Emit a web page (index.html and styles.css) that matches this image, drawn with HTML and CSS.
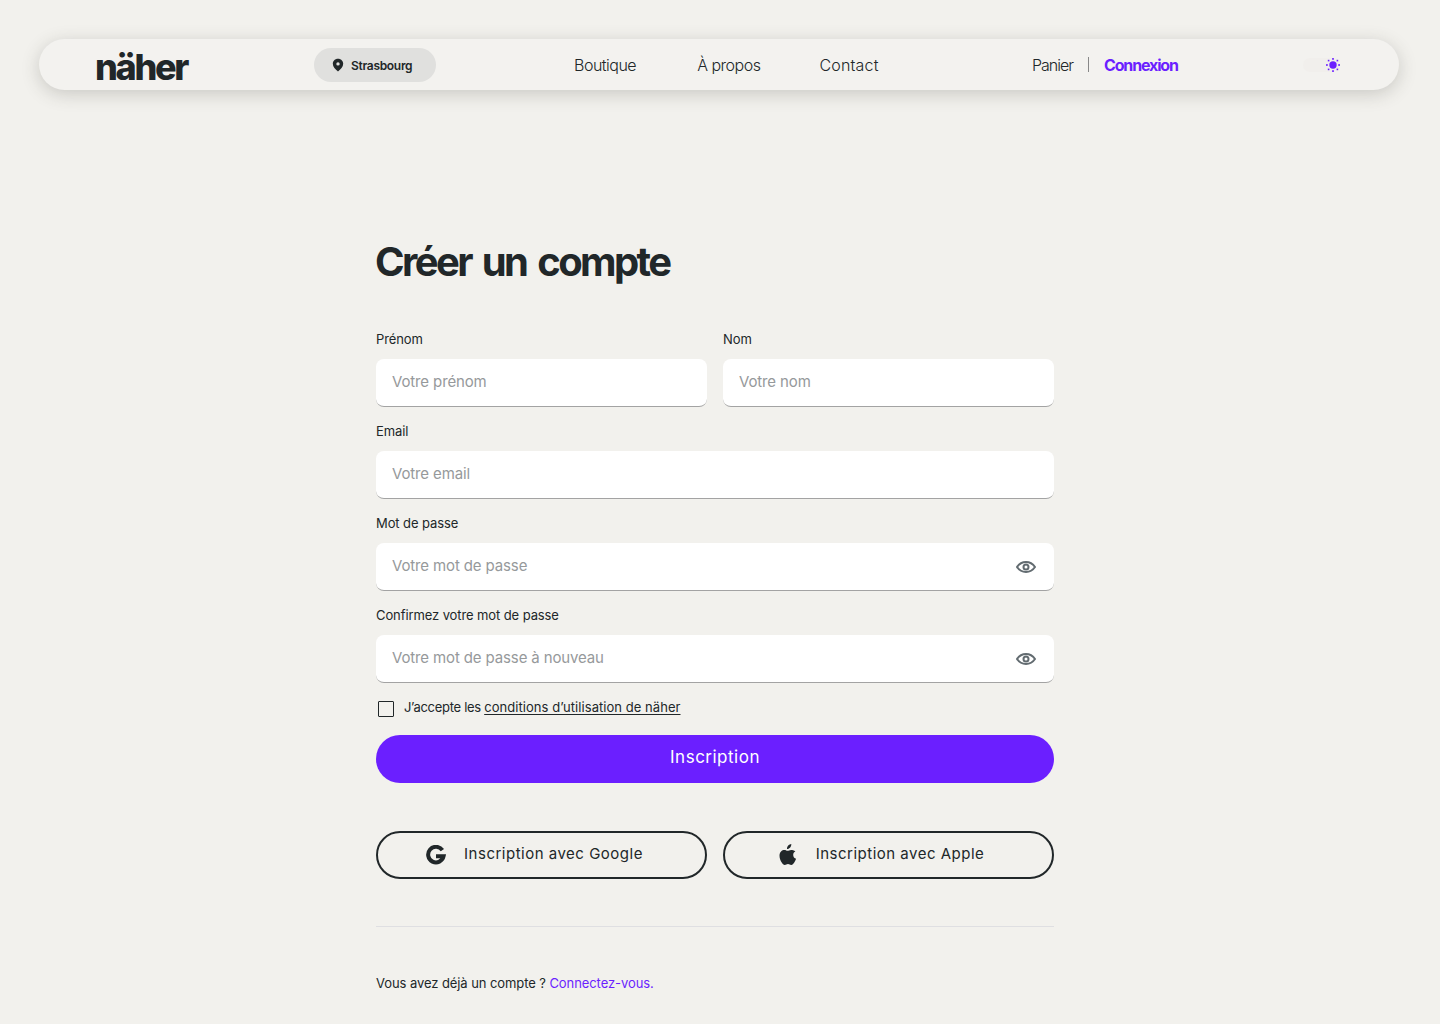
FILE: index.html
```html
<!DOCTYPE html>
<html lang="fr">
<head>
    <meta charset="UTF-8">
    <title>näher - Créer un compte</title>
    <link rel="stylesheet" href="styles.css">
</head>
<body>

    <header class="navbar">
        <a class="logo" href="#">näher</a>
        <div class="location">
            <svg width="12" height="14" viewBox="0 0 12 14"><path fill="#212729" fill-rule="evenodd" d="M6 .8C3 .8.8 3 .8 5.800c0 3 2.600 5.700 5.200 7.700 2.600-2 5.200-4.700 5.200-7.700C11.200 3 9 .8 6 .8zM6 4.200a1.700 1.700 0 1 1 0 3.400 1.700 1.700 0 0 1 0-3.400z"/></svg>
            <span>Strasbourg</span>
        </div>
        <nav class="menu">
            <a href="#">Boutique</a>
            <a href="#">À propos</a>
            <a class="contact" href="#">Contact</a>
        </nav>
        <div class="account">
            <a href="#">Panier</a>
            <span class="sep"></span>
            <a class="login" href="#">Connexion</a>
        </div>
        <div class="theme-toggle">
            <svg width="14" height="14" viewBox="0 0 14 14" fill="#6b1fff"><circle cx="7" cy="7" r="3.700"/><rect x="6.200" y="0" width="1.600" height="1.800"/><rect x="6.200" y="12.200" width="1.600" height="1.800"/><rect x="0" y="6.200" width="1.800" height="1.600"/><rect x="12.200" y="6.200" width="1.800" height="1.600"/><rect x="1.800" y="1.800" width="1.600" height="1.600"/><rect x="10.600" y="1.800" width="1.600" height="1.600"/><rect x="1.800" y="10.600" width="1.600" height="1.600"/><rect x="10.600" y="10.600" width="1.600" height="1.600"/></svg>
        </div>
    </header>

    <main class="signup">
        <h1>Créer un compte</h1>

        <form>
            <div class="two-cols">
                <div class="field">
                    <label for="prenom">Prénom</label>
                    <input id="prenom" type="text" placeholder="Votre prénom">
                </div>
                <div class="field">
                    <label for="nom">Nom</label>
                    <input id="nom" type="text" placeholder="Votre nom">
                </div>
            </div>

            <div class="field">
                <label for="email">Email</label>
                <input id="email" type="text" placeholder="Votre email">
            </div>

            <div class="field">
                <label for="mdp">Mot de passe</label>
                <div class="input-wrap">
                    <input id="mdp" type="password" placeholder="Votre mot de passe">
                    <svg class="eye" width="20" height="12" viewBox="0 0 20 12" fill="none" stroke="#626b70" stroke-width="2"><path d="M1 6c2.200-3.200 5.200-5 9-5s6.800 1.800 9 5c-2.200 3.200-5.200 5-9 5S3.200 9.200 1 6z"/><circle cx="10" cy="6" r="2.500"/></svg>
                </div>
            </div>

            <div class="field">
                <label for="mdp2">Confirmez votre mot de passe</label>
                <div class="input-wrap">
                    <input id="mdp2" type="password" placeholder="Votre mot de passe à nouveau">
                    <svg class="eye" width="20" height="12" viewBox="0 0 20 12" fill="none" stroke="#626b70" stroke-width="2"><path d="M1 6c2.200-3.200 5.200-5 9-5s6.800 1.800 9 5c-2.200 3.200-5.200 5-9 5S3.200 9.200 1 6z"/><circle cx="10" cy="6" r="2.500"/></svg>
                </div>
            </div>

            <div class="terms">
                <span class="checkbox"></span>
                <span>J’accepte les <a href="#">conditions d’utilisation de näher</a></span>
            </div>

            <button class="btn-primary" type="button">Inscription</button>

            <div class="two-cols socials">
                <button class="btn-social" type="button">
                    <svg width="20" height="20" viewBox="0 0 20 20"><path fill="none" stroke="#212729" stroke-width="4" d="M16.400 5.200A7.800 7.800 0 1 0 17.600 11.200H10"/></svg>
                    Inscription avec Google
                </button>
                <button class="btn-social apple" type="button">
                    <svg width="18" height="21" viewBox="0 0 18 21"><path fill="#212729" d="M12.300 0c.1 1.300-.4 2.500-1.100 3.400-.8.900-2 1.600-3.200 1.500-.1-1.200.5-2.500 1.200-3.300C10 .7 11.300.1 12.300 0zM16.400 7.200c-1.400.9-2.200 2.100-2.200 3.700 0 1.900 1.200 3.200 2.900 3.900-.5 1.400-1.100 2.700-2 3.900-.8 1.100-1.600 2.200-2.900 2.200-1.300 0-1.700-.8-3.200-.8s-2 .8-3.200.8c-1.300 0-2.200-1.200-3.100-2.400C1.400 16.700.5 14.200.5 11.800c0-3.800 2.500-5.800 4.900-5.800 1.300 0 2.400.8 3.200.8.800 0 2-.9 3.500-.9 1.100 0 3 .3 4.300 1.300z"/></svg>
                    Inscription avec Apple
                </button>
            </div>
        </form>

        <hr>

        <p class="login-hint">Vous avez déjà un compte ? <a href="#">Connectez-vous.</a></p>
    </main>

</body>
</html>
```

FILE: styles.css
```css
* {
    box-sizing: border-box;
}

body {
    margin: 0;
    min-height: 1024px;
    background-color: #f2f1ed;
    color: #212729;
    font-family: 'Inter', sans-serif;
    padding-top: 39px;
    overflow: hidden;
}

a {
    color: inherit;
    text-decoration: none;
}

.navbar {
    display: flex;
    align-items: center;
    width: 1360px;
    height: 51px;
    margin-left: 39px;
    padding-left: 56px;
    background-color: #f3f2ef;
    border-radius: 26px;
    box-shadow: 0 4px 18px rgba(60, 60, 50, 0.22);
}

.logo {
    width: 219px;
    font-size: 36px;
    font-weight: 800;
    letter-spacing: -2.3px;
    line-height: 51px;
    margin-top: 5px;
}

.location {
    display: flex;
    align-items: center;
    gap: 7px;
    width: 122px;
    height: 34px;
    padding-left: 18px;
    background-color: #e0e0de;
    border-radius: 17px;
    font-size: 12px;
    font-weight: 600;
    letter-spacing: -0.3px;
}

.location span {
    margin-top: 1px;
}

.menu {
    display: flex;
    gap: 61px;
    margin-left: 138px;
    font-size: 16px;
    font-weight: 300;
    letter-spacing: -0.5px;
    width: 458px;
}

.contact {
    margin-left: -2px;
    letter-spacing: 0.2px;
}

.account {
    display: flex;
    align-items: center;
    font-size: 16px;
    font-weight: 300;
    letter-spacing: -1px;
    width: 271px;
}

.sep {
    width: 1px;
    height: 15px;
    margin: 0 15px 0 15px;
    background-color: #888;
}

.login {
    color: #6b1fff;
    font-weight: 700;
    letter-spacing: -1.15px;
}

.theme-toggle {
    display: flex;
    justify-content: flex-end;
    align-items: center;
    width: 37px;
    height: 14px;
    background-color: #f1efec;
    border-radius: 7px;
}

.signup {
    width: 678px;
    margin-left: 376px;
    padding-top: 144px;
}

h1 {
    margin: 0 0 39px -1px;
    font-size: 40px;
    line-height: 56px;
    font-weight: 700;
    letter-spacing: -2.6px;
    word-spacing: 4px;
}

.two-cols {
    display: grid;
    grid-template-columns: 1fr 1fr;
    gap: 16px;
}

.field {
    margin-bottom: 14px;
}

.field label {
    display: block;
    height: 20px;
    margin-bottom: 10px;
    font-size: 13px;
    line-height: 20px;
    letter-spacing: -0.1px;
}

.field input {
    display: block;
    width: 100%;
    height: 48px;
    padding: 0 16px 3px;
    border: 0;
    border-bottom: 1px solid #a3a3a3;
    border-radius: 8px;
    background-color: #fff;
    color: #212729;
    font-family: inherit;
    font-size: 15px;
    letter-spacing: -0.13px;
}

.field input::placeholder {
    color: #96999b;
}

.input-wrap {
    position: relative;
}

.eye {
    position: absolute;
    right: 18px;
    top: 18px;
}

.terms {
    display: flex;
    align-items: center;
    gap: 10px;
    height: 20px;
    margin: 0 0 18px 2px;
    font-size: 13px;
    letter-spacing: -0.3px;
}

.terms a {
    letter-spacing: 0.05px;
    text-decoration: underline;
    text-underline-offset: 2px;
}

.checkbox {
    width: 16px;
    height: 16px;
    margin-top: 4px;
    border: 1px solid #212729;
    border-radius: 1px;
}

.btn-primary {
    display: block;
    width: 100%;
    height: 48px;
    padding-bottom: 5px;
    border: 0;
    border-radius: 24px;
    background-color: #6b1fff;
    color: #fff;
    font-family: inherit;
    font-size: 17px;
    font-weight: 400;
    letter-spacing: 0.5px;
}

.socials {
    margin-top: 48px;
}

.btn-social {
    display: flex;
    align-items: center;
    justify-content: center;
    gap: 18px;
    height: 48px;
    padding: 0 14px 3px 0;
    border: 2px solid #212729;
    border-radius: 24px;
    background: none;
    color: #212729;
    font-family: inherit;
    font-size: 15px;
    font-weight: 400;
    letter-spacing: 0.5px;
}

.btn-social svg {
    margin-top: 2px;
}

.apple {
    gap: 19px;
}

hr {
    height: 1px;
    margin: 47px 0 0;
    border: 0;
    background-color: #dfdfe2;
}

.login-hint {
    margin: 46px 0 0;
    font-size: 13px;
    line-height: 20px;
    letter-spacing: -0.08px;
}

.login-hint a {
    color: #6b1fff;
}
```
